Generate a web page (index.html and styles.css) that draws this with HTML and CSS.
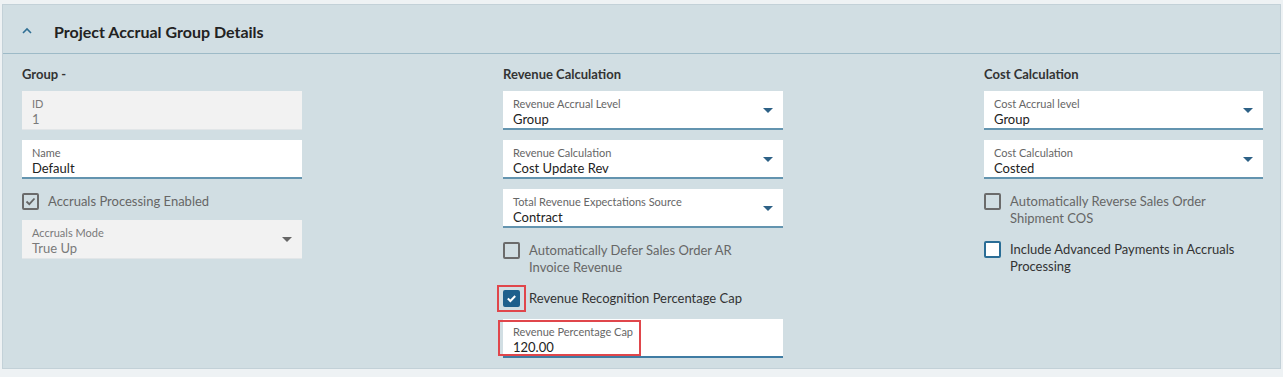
FILE: index.html
```html
<html>
	<head>
		<link rel="stylesheet" href="styles.css">
	</head>
	<body>
		<div class="panel">
			<div class="panelHead">
				<svg class="chev" width="10" height="7" viewBox="0 0 10 7"><path d="M1 6 L5 2 L9 6" fill="none" stroke="#2f6f94" stroke-width="1.6"/></svg>
				<span class="panelTitle">Project Accrual Group Details</span>
			</div>
			<div class="panelBody">
				<!-- Group -->
				<div class="col">
					<div class="colTitle">Group -</div>
					<div class="field disabled">
						<div class="fLabel">ID</div>
						<div class="fValue">1</div>
					</div>
					<div class="field">
						<div class="fLabel">Name</div>
						<div class="fValue">Default</div>
					</div>
					<div class="check off">
						<span class="box"><svg width="13" height="13" viewBox="0 0 13 13"><path d="M2.5 6.5 L5.3 9.2 L10.5 3.5" fill="none" stroke="#666" stroke-width="1.8"/></svg></span>
						<span class="cLabel">Accruals Processing Enabled</span>
					</div>
					<div class="field disabled select">
						<div class="fLabel">Accruals Mode</div>
						<div class="fValue">True Up</div>
						<span class="arrow grayArrow"></span>
					</div>
				</div>

				<!-- Revenue -->
				<div class="col">
					<div class="colTitle">Revenue Calculation</div>
					<div class="field select">
						<div class="fLabel">Revenue Accrual Level</div>
						<div class="fValue">Group</div>
						<span class="arrow"></span>
					</div>
					<div class="field select">
						<div class="fLabel">Revenue Calculation</div>
						<div class="fValue">Cost Update Rev</div>
						<span class="arrow"></span>
					</div>
					<div class="field select">
						<div class="fLabel">Total Revenue Expectations Source</div>
						<div class="fValue">Contract</div>
						<span class="arrow"></span>
					</div>
					<div class="check off">
						<span class="box"></span>
						<span class="cLabel">Automatically Defer Sales Order AR<br>Invoice Revenue</span>
					</div>
					<div class="check">
						<span class="box blueChecked marked"><svg width="13" height="13" viewBox="0 0 13 13"><path d="M2.8 6.6 L5.4 9 L10.2 4" fill="none" stroke="#fff" stroke-width="2"/></svg></span>
						<span class="cLabel">Revenue Recognition Percentage Cap</span>
					</div>
					<div class="field capField">
						<div class="fLabel">Revenue Percentage Cap</div>
						<div class="fValue">120.00</div>
						<span class="mark"></span>
					</div>
				</div>

				<!-- Cost -->
				<div class="col">
					<div class="colTitle">Cost Calculation</div>
					<div class="field select">
						<div class="fLabel">Cost Accrual level</div>
						<div class="fValue">Group</div>
						<span class="arrow"></span>
					</div>
					<div class="field select">
						<div class="fLabel">Cost Calculation</div>
						<div class="fValue">Costed</div>
						<span class="arrow"></span>
					</div>
					<div class="check off">
						<span class="box"></span>
						<span class="cLabel">Automatically Reverse Sales Order<br>Shipment COS</span>
					</div>
					<div class="check">
						<span class="box blueBox"></span>
						<span class="cLabel">Include Advanced Payments in Accruals<br>Processing</span>
					</div>
				</div>
			</div>
		</div>
	</body>
</html>
```

FILE: styles.css
```css
body {
	margin: 0;
	background-color: #eef2f4;
	font-family: "Lato", "Open Sans", sans-serif;
	color: #333333;
}
.panel {
	margin: 4px 2px 0 2px;
	border: 1px solid #c3d1d8;
	background-color: #d1dee3;
	height: 365px;
	box-sizing: border-box;
}
.panelHead {
	height: 48px;
	border-bottom: 1px solid #9dbac7;
	display: flex;
	align-items: center;
	padding-left: 19px;
}
.chev {
	margin-right: 22px;
	margin-top: 2px;
}
.panelTitle {
	font-size: 16px;
	font-weight: bold;
	color: #222222;
	margin-top: 4px;
}
.panelBody {
	display: grid;
	grid-template-columns: 280px 280px 279px;
	column-gap: 201px;
	padding: 10px 0 0 19px;
}
.col {
	display: flex;
	flex-direction: column;
}
.colTitle {
	font-size: 13px;
	font-weight: bold;
	color: #333333;
	line-height: 20px;
	height: 20px;
	margin-bottom: 7px;
}
.field {
	position: relative;
	height: 39px;
	box-sizing: border-box;
	background-color: #ffffff;
	border-bottom: 2px solid #6394af;
	padding: 6px 10px 0 10px;
	margin-bottom: 10px;
}
.field.disabled {
	background-color: #f2f2f2;
	border-bottom: 1px solid #e2e6e8;
}
.fLabel {
	font-size: 11px;
	line-height: 14px;
	color: #666666;
}
.fValue {
	font-size: 13px;
	line-height: 16px;
	color: #222222;
}
.disabled .fLabel, .disabled .fValue {
	color: #7a7a7a;
}
.arrow {
	position: absolute;
	right: 10px;
	top: 17px;
	width: 0;
	height: 0;
	border-left: 5px solid transparent;
	border-right: 5px solid transparent;
	border-top: 5px solid #2d6186;
}
.grayArrow {
	border-top-color: #666666;
}
.check {
	display: flex;
	align-items: flex-start;
	margin-top: 4px;
	margin-bottom: 10px;
}
.box {
	position: relative;
	width: 17px;
	height: 17px;
	box-sizing: border-box;
	border: 2px solid #6b6b6b;
	border-radius: 2px;
	margin: 0 9px 0 0;
	flex-shrink: 0;
	display: flex;
	align-items: center;
	justify-content: center;
}
.blueBox {
	border-color: #2a6d96;
	background-color: #ffffff;
}
.blueChecked {
	border-color: #1e5f8c;
	background-color: #1e5f8c;
}
.marked::after {
	content: "";
	position: absolute;
	left: -8px;
	top: -7px;
	width: 29px;
	height: 27px;
	box-sizing: border-box;
	border: 2px solid #e0464b;
}
.cLabel {
	font-size: 13px;
	line-height: 17px;
	color: #333333;
}
.off .cLabel {
	color: #666666;
}
.capField {
	margin-top: 2px;
	border-bottom-color: #3f7ca3;
}
.mark {
	position: absolute;
	left: -5px;
	top: 1px;
	width: 143px;
	height: 36px;
	box-sizing: border-box;
	border: 2px solid #e0464b;
}
```
